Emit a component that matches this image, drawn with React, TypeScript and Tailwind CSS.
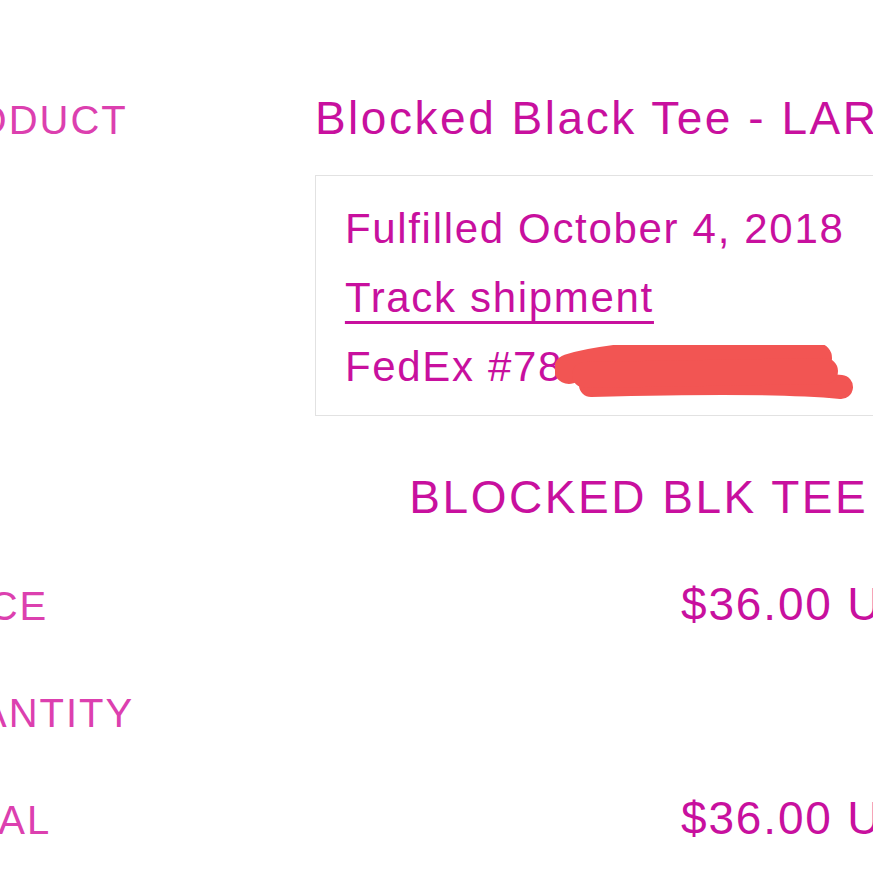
import type { ReactNode } from "react";

// Order line item, photographed close up: the page is wider than the window,
// so the label column runs off the left edge and the values off the right.

const FONT = "font-['Liberation_Sans','Helvetica',sans-serif]";
const LABEL = "text-[40px] leading-[55px] tracking-[0.05em] uppercase text-[#dc40af]";
const VALUE = "text-[46px] leading-[55px] text-[#c8109e]";

function Row({ label, children }: { label: string; children: ReactNode }) {
  return (
    <div className="flex items-baseline justify-between py-[25px]">
      <div className={LABEL}>{label}</div>
      <div className={VALUE}>{children}</div>
    </div>
  );
}

export default function App() {
  return (
    <div className={`relative h-[873px] w-[873px] overflow-hidden bg-white ${FONT}`}>
      <div className="-ml-[84px] w-[1034px] pt-[66px]">
        <Row label="Product">
          <div className="tracking-[0.055em]">Blocked Black Tee - LARGE</div>
          <div className="mt-[29px] mb-1 border border-[#e2e2e2] pt-[18px] pb-[14px] px-[29px] text-[42px] leading-[69px] tracking-[0.04em]">
            <div>Fulfilled October 4, 2018</div>
            <div>
              <a className="underline decoration-[3px] underline-offset-[9px]">Track shipment</a>
            </div>
            <div className="relative">
              FedEx #78
              {/* redaction scribble over the tracking number */}
              <svg
                className="absolute left-[210px] top-[13px]"
                width="300"
                height="58"
                viewBox="0 0 300 58"
                fill="none"
              >
                <path d="M14 24 C 60 10, 150 6, 262 13" stroke="#f25553" strokeWidth="30" strokeLinecap="round" />
                <path d="M36 40 C 120 38, 220 36, 286 42" stroke="#f25553" strokeWidth="24" strokeLinecap="round" />
                <path d="M30 30 L 270 26" stroke="#f25553" strokeWidth="26" strokeLinecap="round" />
              </svg>
            </div>
          </div>
        </Row>
        <Row label="SKU">
          <span className="tracking-[0.055em]">BLOCKED BLK TEE LG</span>
        </Row>
        <Row label="Price">
          <span className="tracking-[0.04em]">$36.00 USD</span>
        </Row>
        <Row label="Quantity">
          <span className="invisible">1</span>
        </Row>
        <Row label="Total">
          <span className="tracking-[0.04em]">$36.00 USD</span>
        </Row>
      </div>
    </div>
  );
}
